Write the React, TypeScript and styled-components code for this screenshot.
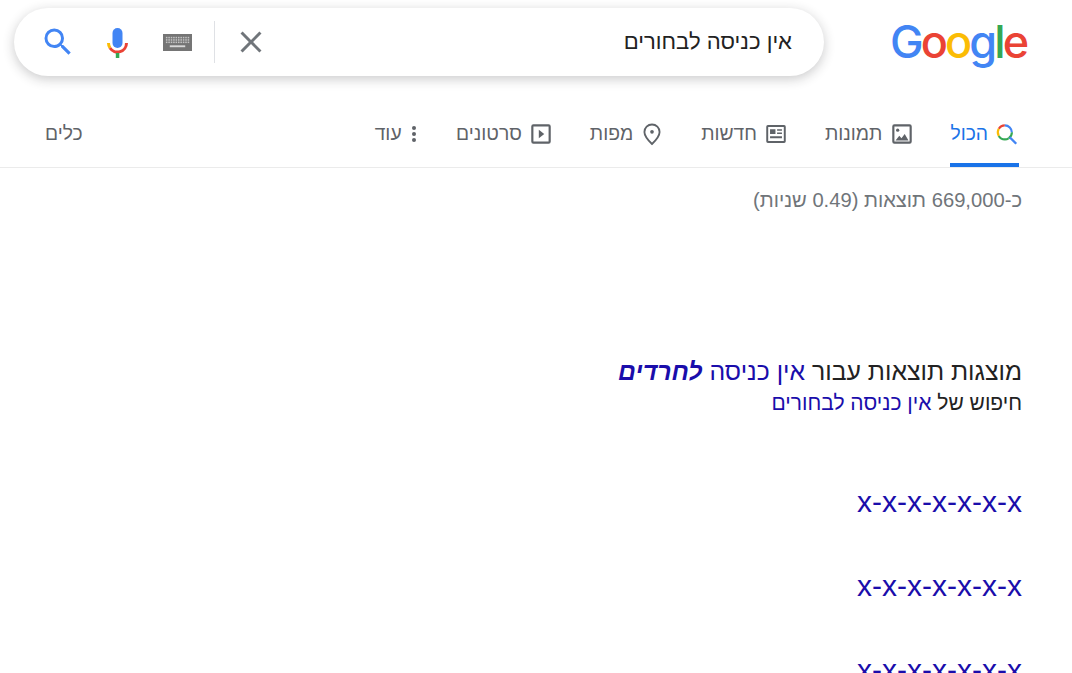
import React from 'react'
import styled, { createGlobalStyle } from 'styled-components'

const GlobalStyle = createGlobalStyle`
  html, body {
    margin: 0;
    height: 100%;
    overflow: hidden;
    background: #fff;
    font-family: 'Liberation Sans', Arial, sans-serif;
  }
`

const Page = styled.div`
  height: 673px;
  overflow: hidden;
  direction: rtl;
`

const Header = styled.header`
  display: flex;
  justify-content: space-between;
  align-items: center;
  padding: 8px 45px 0 14px;
`

const Logo = styled.div`
  direction: ltr;
  width: 137px;
  font-family: Inter, sans-serif;
  font-size: 45px;
  font-weight: 500;
  line-height: 64px;
  letter-spacing: -2.9px;
  white-space: nowrap;
`

const LogoLetter = styled.span<{ $color: string }>`
  color: ${p => p.$color};
`

const SearchBar = styled.div`
  width: 810px;
  height: 68px;
  box-sizing: border-box;
  display: flex;
  align-items: center;
  padding: 0 32px 0 16px;
  border-radius: 34px;
  background: #fff;
  box-shadow: 0 3px 12px rgba(32, 33, 36, 0.24);
`

const Query = styled.div`
  flex: 1;
  font-size: 22.1px;
  color: #222;
`

const BarIcons = styled.div`
  direction: ltr;
  display: flex;
  align-items: center;
  height: 42px;
`

const BarIcon = styled.svg<{ $left: number }>`
  display: block;
  flex: none;
  margin-left: ${p => p.$left}px;
`

const Divider = styled.div`
  flex: none;
  width: 1px;
  height: 42px;
  margin-left: 22px;
  background: #dfe1e5;
`

const Tabs = styled.nav`
  display: flex;
  align-items: stretch;
  height: 92px;
  box-sizing: border-box;
  padding: 0 53px 0 45px;
  border-bottom: 1px solid #ebebeb;
`

const Tab = styled.div<{ $active?: boolean }>`
  display: flex;
  align-items: center;
  gap: 9.5px;
  padding: 29px 2px 0 0;
  margin-left: 37px;
  box-sizing: border-box;
  font-size: 19.3px;
  color: ${p => (p.$active ? '#1a73e8' : '#5f6368')};
  border-bottom: ${p => (p.$active ? '4px solid #1a73e8' : '4px solid transparent')};
`

const Tools = styled(Tab)`
  margin-left: 0;
  margin-right: auto;
`

const TabSvg = styled.svg`
  display: block;
  flex: none;
  margin: -3.25px;
`

const Main = styled.main`
  padding: 0 50px 0 0;
`

const Stats = styled.div`
  margin-top: 21px;
  font-size: 20.2px;
  line-height: 22px;
  color: #70757a;
`

const Corrected = styled.div`
  margin-top: 146px;
  font-size: 24.8px;
  line-height: 30px;
  color: #222;
`

const Original = styled.div`
  margin-top: 1px;
  font-size: 21px;
  line-height: 30px;
  color: #222;
`

const Blue = styled.span`
  color: #1a0dab;
`

const Strong = styled.b`
  font-style: italic;
  color: #1a0dab;
`

const Results = styled.div`
  display: flex;
  flex-direction: column;
  gap: 46px;
  margin-top: 65px;
`

const ResultTitle = styled.div`
  font-size: 30px;
  line-height: 38px;
  color: #1a0dab;
`

const keyCells = [0, 1, 2].flatMap(row =>
  Array.from({ length: 10 }, (_, col) => ({ row, col })),
)

const TabIcon = ({ children }: { children: React.ReactNode }) => (
  <TabSvg width="26" height="26" viewBox="0 0 24 24" fill="#5f6368">
    {children}
  </TabSvg>
)

const googleLetters: [string, string][] = [
  ['G', '#4285f4'],
  ['o', '#ea4335'],
  ['o', '#fbbc05'],
  ['g', '#4285f4'],
  ['l', '#34a853'],
  ['e', '#ea4335'],
]

export default function App() {
  return (
    <Page>
      <GlobalStyle />
      <Header>
        <Logo>
          {googleLetters.map(([letter, color], i) => (
            <LogoLetter key={i} $color={color}>
              {letter}
            </LogoLetter>
          ))}
        </Logo>
        <SearchBar>
          <Query>אין כניסה לבחורים</Query>
          <BarIcons>
            <BarIcon $left={10} width="36" height="36" viewBox="0 0 24 24" fill="#4285f4">
              <path d="M15.5 14h-.79l-.28-.27A6.471 6.471 0 0 0 16 9.5 6.5 6.5 0 1 0 9.5 16c1.61 0 3.09-.59 4.23-1.57l.27.28v.79l5 4.99L20.49 19l-4.99-5zm-6 0C7.01 14 5 11.99 5 9.5S7.01 5 9.5 5 14 7.01 14 9.5 11.99 14 9.5 14z" />
            </BarIcon>
            <BarIcon $left={30} width="24" height="32" viewBox="0 0 24 32" fill="none">
              <rect x="6.500" y="2" width="10" height="20" rx="5" fill="#4285f4" />
              <path d="M2.500 17A9 9 0 0 0 4 22" stroke="#fbbc05" strokeWidth="3" />
              <path d="M4 22A9 9 0 0 0 20.500 17" stroke="#ea4335" strokeWidth="3" />
              <rect x="9.800" y="27" width="3.500" height="5" fill="#34a853" />
            </BarIcon>
            <BarIcon $left={33} width="29" height="17" viewBox="0 0 30 18" preserveAspectRatio="none">
              <rect width="30" height="18" fill="#757575" />
              {keyCells.map(({ row, col }) => (
                <rect
                  key={`${row}-${col}`}
                  x={3 + col * 2.5}
                  y={3 + row * 2.5}
                  width="1.600"
                  height="1.600"
                  fill="#c4c4c4"
                />
              ))}
              <rect x="7" y="12" width="16" height="2" fill="#d8d8d8" />
            </BarIcon>
            <Divider />
            <BarIcon $left={18} width="36" height="36" viewBox="0 0 24 24" fill="#70757a">
              <path d="M19 6.410L17.590 5 12 10.590 6.410 5 5 6.410 10.590 12 5 17.590 6.410 19 12 13.410 17.590 19 19 17.590 13.410 12z" />
            </BarIcon>
          </BarIcons>
        </SearchBar>
      </Header>

      <Tabs>
        <Tab $active>
          <TabSvg width="26" height="26" viewBox="0 0 24 24" fill="none" strokeWidth="2">
            <path d="M10 4a6.500 6.500 0 0 0-5.600 3.200" stroke="#ea4335" />
            <path d="M4.400 7.200a6.500 6.500 0 0 0 0 6.600" stroke="#fbbc05" />
            <path d="M4.400 13.800a6.500 6.500 0 0 0 5.600 3.200 6.500 6.500 0 0 0 3.500-1" stroke="#34a853" />
            <path d="M10 4a6.500 6.500 0 0 1 6.500 6.500" stroke="#4285f4" />
            <path d="M16.500 10.500a6.500 6.500 0 0 1-3 5.500" stroke="#34a853" />
            <path d="M14.500 15L20.500 21" stroke="#4285f4" strokeWidth="2.200" />
          </TabSvg>
          הכול
        </Tab>
        <Tab>
          <TabIcon>
            <path d="M19 3H5a2 2 0 0 0-2 2v14a2 2 0 0 0 2 2h14a2 2 0 0 0 2-2V5a2 2 0 0 0-2-2zm0 16H5V5h14v14z" />
            <circle cx="8" cy="8.500" r="1.500" />
            <path d="M6 18l3.500-4.500 2 2.500 3-4 3.500 6z" />
          </TabIcon>
          תמונות
        </Tab>
        <Tab>
          <TabIcon>
            <path d="M19.500 3.700h-15A1.500 1.500 0 0 0 3 5.200v13.600a1.500 1.500 0 0 0 1.500 1.500h15a1.500 1.500 0 0 0 1.500-1.500V5.200a1.500 1.500 0 0 0-1.500-1.500zm-.3 14.800H4.800v-13h14.400v13z" />
            <path d="M6.500 7.500h5v4.500h-5zM13 7.500h4.500v1.500H13zM13 10.500h4.500V12H13zM6.500 14h11v2h-11z" />
          </TabIcon>
          חדשות
        </Tab>
        <Tab>
          <TabIcon>
            <path
              d="M12 3.200a7 7 0 0 0-7 7c0 4.500 7 11 7 11s7-6.500 7-11a7 7 0 0 0-7-7z"
              fill="none"
              stroke="#5f6368"
              strokeWidth="1.700"
            />
            <circle cx="12" cy="10" r="1.700" />
          </TabIcon>
          מפות
        </Tab>
        <Tab>
          <TabIcon>
            <path d="M19 3H5a2 2 0 0 0-2 2v14a2 2 0 0 0 2 2h14a2 2 0 0 0 2-2V5a2 2 0 0 0-2-2zm0 16H5V5h14v14z" />
            <path d="M10 8v8l5-4z" />
          </TabIcon>
          סרטונים
        </Tab>
        <Tab>
          <svg width="6" height="16" viewBox="0 0 6 16" fill="#5f6368">
            <circle cx="3" cy="2" r="2" />
            <circle cx="3" cy="8" r="2" />
            <circle cx="3" cy="14" r="2" />
          </svg>
          עוד
        </Tab>
        <Tools>כלים</Tools>
      </Tabs>

      <Main>
        <Stats>כ-669,000 תוצאות (0.49 שניות)</Stats>
        <Corrected>
          מוצגות תוצאות עבור <Blue>אין כניסה</Blue> <Strong>לחרדים</Strong>
        </Corrected>
        <Original>
          חיפוש של <Blue>אין כניסה לבחורים</Blue>
        </Original>
        <Results>
          <ResultTitle>x-x-x-x-x-x-x</ResultTitle>
          <ResultTitle>x-x-x-x-x-x-x</ResultTitle>
          <ResultTitle>x-x-x-x-x-x-x</ResultTitle>
        </Results>
      </Main>
    </Page>
  )
}
